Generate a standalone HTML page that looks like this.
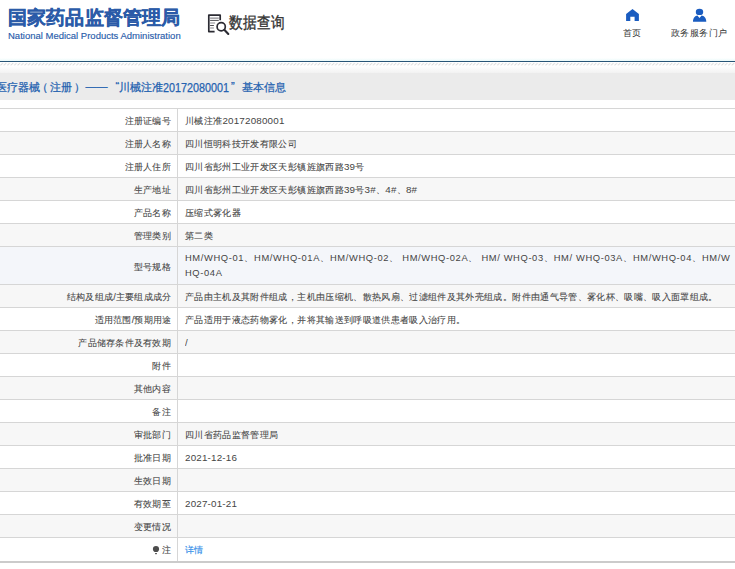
<!DOCTYPE html>
<html><head><meta charset="utf-8">
<style>
html,body{margin:0;padding:0;background:#fff;width:735px;height:569px;overflow:hidden;font-family:"Liberation Sans",sans-serif;}
#hdr{position:absolute;left:0;top:0;width:735px;height:58px;background:#fff;}
#logo1{position:absolute;left:8px;top:6px;font-size:24px;line-height:30px;font-weight:700;-webkit-text-stroke:0.5px #2b5ba8;color:#2b5ba8;white-space:nowrap;letter-spacing:0.8px;transform:scale(0.772);transform-origin:0 0;}
#logo2{position:absolute;left:8px;top:30px;font-size:9.5px;color:#2a5dab;-webkit-text-stroke:0.15px #2a5dab;white-space:nowrap;}
#sq{position:absolute;left:204px;top:10px;}
#sqt{position:absolute;left:229px;top:12.5px;font-size:14px;color:#333;font-weight:400;-webkit-text-stroke:0.3px #333;white-space:nowrap;transform:scaleY(1.17);transform-origin:0 0;}
.nav{position:absolute;top:27px;font-size:12px;line-height:16px;color:#333;white-space:nowrap;transform:scale(0.79);transform-origin:0 0;}
#line1{position:absolute;left:0;top:58px;width:735px;height:3px;background:linear-gradient(#fff,#eafafa);}
#grad{position:absolute;left:0;top:66px;width:735px;height:7px;background:linear-gradient(#fff,#f2f2f2);}
#line2{position:absolute;left:0;top:61px;width:735px;height:1px;background:#285577;}
#hatch{position:absolute;left:0;top:62px;width:735px;height:4px;}
#bar{position:absolute;left:0;top:73px;width:735px;height:27px;background:#ebebeb;}
#bart{position:absolute;left:0;top:79.8px;width:735px;height:16px;font-size:11px;color:#2462b0;white-space:nowrap;font-weight:400;-webkit-text-stroke:0.25px #2462b0;}
#bart span{position:absolute;top:0;}
#bart .d{font-size:12.4px;top:1.1px;transform:scaleX(0.87);transform-origin:0 0;}

.r{position:absolute;left:0;width:735px;border-top:1px solid #d6d6d6;box-sizing:border-box;color:#444;-webkit-text-stroke:0.1px #444;}
.r.g{background:#f7f7f7;}
.r.h{background:#f4f6fa;}
.r::after{content:"";position:absolute;left:177px;top:0;bottom:0;width:1px;background:#d6d6d6;}
.tl{position:absolute;right:564px;font-size:12px;line-height:16px;white-space:nowrap;transform:scale(0.772);transform-origin:100% 0;}
.tv{position:absolute;left:184.7px;font-size:12px;line-height:16px;white-space:nowrap;transform:scale(0.779);transform-origin:0 0;}
.pin{position:absolute;left:151px;}
.n{font-style:normal;font-size:12.6px;letter-spacing:0.25px;-webkit-text-stroke:0;}
.ls{letter-spacing:0.8px;-webkit-text-stroke:0;}
#tb{position:absolute;left:0;top:561.00px;width:735px;height:2px;background:#cbcbcb;}

</style></head><body>
<div id="hdr">
  <div id="logo1">国家药品监督管理局</div>
  <div id="logo2">National Medical Products Administration</div>
  <svg id="sq" width="30" height="28" viewBox="0 0 30 28">
    <path d="M10.6 21.6H4.8V5.2H16.2V10.3" fill="none" stroke="#2b2b33" stroke-width="1.7" stroke-linejoin="round"/>
    <path d="M6.1 8.1h8.7M6.1 13h5M6.1 18h3.8" stroke="#8a8a90" stroke-width="1.1"/>
    <path d="M6.1 10.4h8.7M6.1 15.5h3.8" stroke="#3a3a40" stroke-width="0.9"/>
    <circle cx="17.2" cy="16.7" r="4.1" fill="none" stroke="#2b2b33" stroke-width="1.7"/>
    <path d="M20.3 19.8L24.3 24" stroke="#2b2b33" stroke-width="2.1" stroke-linecap="round"/>
  </svg>
  <div id="sqt">数据查询</div>
  <svg style="position:absolute;left:626px;top:8px" width="13" height="14" viewBox="0 0 13 14">
    <path d="M6.5 0.9L12.9 6.1V13H8.6V8.7H4.3V13H0.1V6.1Z" fill="#1a5cc0"/>
  </svg>
  <div class="nav" style="left:623px">首页</div>
  <svg style="position:absolute;left:692px;top:7px" width="16" height="16" viewBox="0 0 16 16">
    <ellipse cx="7.5" cy="4.9" rx="3.7" ry="3.2" fill="#1a5cc0"/>
    <path d="M1 14.7C1 10.6 3.3 8.7 5.4 8.4L7.5 10.9L9.6 8.4C11.8 8.7 14.3 10.6 14.3 14.7Z" fill="#1a5cc0"/>
  </svg>
  <div class="nav" style="left:671px">政务服务门户</div>
</div>
<div id="line1"></div>
<div id="line2"></div>
<svg id="hatch" width="735" height="4">
  <defs><pattern id="hp" width="3.45" height="4" patternUnits="userSpaceOnUse">
    <path d="M0.4 3.4L2.9 1" stroke="#dadada" stroke-width="1"/></pattern></defs>
  <rect width="735" height="4" fill="url(#hp)"/>
</svg>
<div id="grad"></div>
<div id="bar"></div>
<div id="bart"><span style="left:-4px">医疗器械</span><span style="left:37px">（</span><span style="left:49.5px">注册</span><span style="left:74px">）</span><span style="left:85.5px">——</span><span style="left:115.4px">“</span><span style="left:119px">川械注准</span><span class="d" style="left:163px">20172080001</span><span style="left:231px">”</span><span style="left:241.5px">基本信息</span></div>
<div class="r" style="top:108.00px;height:23.00px"><span class="tl" style="top:6.00px">注册证编号</span><span class="tv" style="top:6.00px">川械注准<i class="n">20172080001</i></span></div>
<div class="r g" style="top:131.00px;height:23.00px"><span class="tl" style="top:6.00px">注册人名称</span><span class="tv" style="top:6.00px">四川恒明科技开发有限公司</span></div>
<div class="r" style="top:154.00px;height:23.00px"><span class="tl" style="top:6.00px">注册人住所</span><span class="tv" style="top:6.00px">四川省彭州工业开发区天彭镇旌旗西路<i class="n">39</i>号</span></div>
<div class="r g" style="top:177.00px;height:23.00px"><span class="tl" style="top:6.00px">生产地址</span><span class="tv" style="top:6.00px">四川省彭州工业开发区天彭镇旌旗西路<i class="n">39</i>号<i class="n">3#</i>、<i class="n">4#</i>、<i class="n">8#</i></span></div>
<div class="r" style="top:200.00px;height:23.00px"><span class="tl" style="top:6.00px">产品名称</span><span class="tv" style="top:6.00px">压缩式雾化器</span></div>
<div class="r g" style="top:223.00px;height:23.00px"><span class="tl" style="top:6.00px">管理类别</span><span class="tv" style="top:6.00px">第二类</span></div>
<div class="r h" style="top:246.00px;height:38.00px"><span class="tl" style="top:13.50px">型号规格</span><span class="tv ls" style="top:3.60px;line-height:19.3px">HM/WHQ-01、HM/WHQ-01A、HM/WHQ-02、 HM/WHQ-02A、 HM/ WHQ-03、HM/ WHQ-03A、HM/WHQ-04、HM/W<br>HQ-04A</span></div>
<div class="r g" style="top:284.00px;height:23.00px"><span class="tl" style="top:6.00px">结构及组成/主要组成成分</span><span class="tv" style="top:6.00px">产品由主机及其附件组成，主机由压缩机、散热风扇、过滤组件及其外壳组成。附件由通气导管、雾化杯、吸嘴、吸入面罩组成。</span></div>
<div class="r" style="top:307.00px;height:23.00px"><span class="tl" style="top:6.00px">适用范围/预期用途</span><span class="tv" style="top:6.00px">产品适用于液态药物雾化，并将其输送到呼吸道供患者吸入治疗用。</span></div>
<div class="r g" style="top:330.00px;height:23.00px"><span class="tl" style="top:6.00px">产品储存条件及有效期</span><span class="tv" style="top:6.00px"><i class="n">/</i></span></div>
<div class="r" style="top:353.00px;height:23.00px"><span class="tl" style="top:6.00px">附件</span></div>
<div class="r g" style="top:376.00px;height:23.00px"><span class="tl" style="top:6.00px">其他内容</span></div>
<div class="r" style="top:399.00px;height:23.00px"><span class="tl" style="top:6.00px">备注</span></div>
<div class="r g" style="top:422.00px;height:23.00px"><span class="tl" style="top:6.00px">审批部门</span><span class="tv" style="top:6.00px">四川省药品监督管理局</span></div>
<div class="r" style="top:445.00px;height:23.00px"><span class="tl" style="top:6.00px">批准日期</span><span class="tv" style="top:6.00px"><i class="n">2021-12-16</i></span></div>
<div class="r g" style="top:468.00px;height:23.00px"><span class="tl" style="top:6.00px">生效日期</span></div>
<div class="r" style="top:491.00px;height:23.00px"><span class="tl" style="top:6.00px">有效期至</span><span class="tv" style="top:6.00px"><i class="n">2027-01-21</i></span></div>
<div class="r g" style="top:514.00px;height:23.00px"><span class="tl" style="top:6.00px">变更情况</span></div>
<div class="r" style="top:537.00px;height:24.00px"><span class="tl" style="top:6.00px">注</span><svg class="pin" style="top:6px" width="10" height="12" viewBox="0 0 10 12"><circle cx="5" cy="5" r="3.1" fill="#4d4d4d"/><rect x="4" y="9" width="2" height="1.2" fill="#666"/></svg><span class="tv" style="top:6.00px;color:#2b8ae8;-webkit-text-stroke:0.15px #2b8ae8">详情</span></div>
<div id="tb"></div>
</body></html>
